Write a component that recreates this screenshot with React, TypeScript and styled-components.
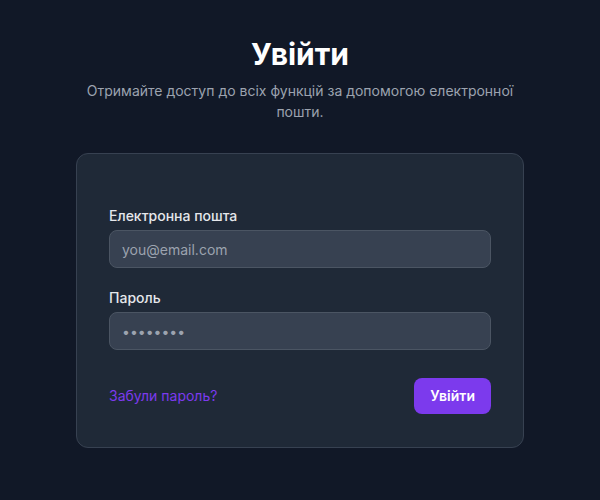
import React from "react";
import styled, { createGlobalStyle } from "styled-components";

const Global = createGlobalStyle`
  html, body { margin: 0; padding: 0; background: #111827; }
  body { font-family: Inter, "Noto Sans", sans-serif; -webkit-font-smoothing: antialiased; }
  * { box-sizing: border-box; }
`;

const Page = styled.main`
  min-height: 500px;
  background: #111827;
  display: flex;
  flex-direction: column;
  align-items: center;
  padding-top: 36px;
`;

const Title = styled.h1`
  margin: 0;
  font-size: 30px;
  line-height: 36px;
  font-weight: 700;
  color: #ffffff;
  text-align: center;
`;

const Subtitle = styled.p`
  margin: 8px 0 0;
  max-width: 448px;
  font-size: 14px;
  line-height: 21px;
  color: #9ca3af;
  text-align: center;
`;

const Card = styled.form`
  margin-top: 31px;
  width: 448px;
  background: #1f2937;
  border: 1px solid #374151;
  border-radius: 12px;
  padding: 52px 32px 33px;
  display: flex;
  flex-direction: column;
`;

const Field = styled.div<{ $gap?: number }>`
  display: flex;
  flex-direction: column;
  gap: 4px;
  margin-top: ${(p) => p.$gap ?? 0}px;
`;

const Label = styled.label`
  font-size: 14px;
  line-height: 20px;
  font-weight: 500;
  color: #e5e7eb;
`;

const Input = styled.input`
  width: 100%;
  height: 38px;
  padding: 8px 12px;
  background: #374151;
  border: 1px solid #4b5563;
  border-radius: 8px;
  font-family: inherit;
  font-size: 14px;
  line-height: 20px;
  color: #f3f4f6;
  outline: none;
  &::placeholder { color: #9ca3af; }
`;

const PasswordInput = styled(Input)`
  letter-spacing: 0;
  color: #9ca3af;
`;

const Actions = styled.div`
  margin-top: 28px;
  display: flex;
  align-items: center;
  justify-content: space-between;
`;

const Link = styled.a`
  font-size: 14px;
  line-height: 20px;
  color: #7c3aed;
  text-decoration: none;
`;

const Button = styled.button`
  height: 36px;
  padding: 0 16px;
  border: none;
  border-radius: 8px;
  background: #7c3aed;
  color: #ffffff;
  font-family: inherit;
  font-size: 14px;
  font-weight: 600;
  line-height: 20px;
  cursor: pointer;
`;

export default function App() {
  return (
    <>
      <Global />
      <Page>
        <Title>Увійти</Title>
        <Subtitle>Отримайте доступ до всіх функцій за допомогою електронної пошти.</Subtitle>
        <Card onSubmit={(e) => e.preventDefault()}>
          <Field>
            <Label htmlFor="email">Електронна пошта</Label>
            <Input id="email" type="email" placeholder="you@email.com" />
          </Field>
          <Field $gap={20}>
            <Label htmlFor="password">Пароль</Label>
            <PasswordInput id="password" type="password" defaultValue="12345678" />
          </Field>
          <Actions>
            <Link href="#">Забули пароль?</Link>
            <Button type="submit">Увійти</Button>
          </Actions>
        </Card>
      </Page>
    </>
  );
}
